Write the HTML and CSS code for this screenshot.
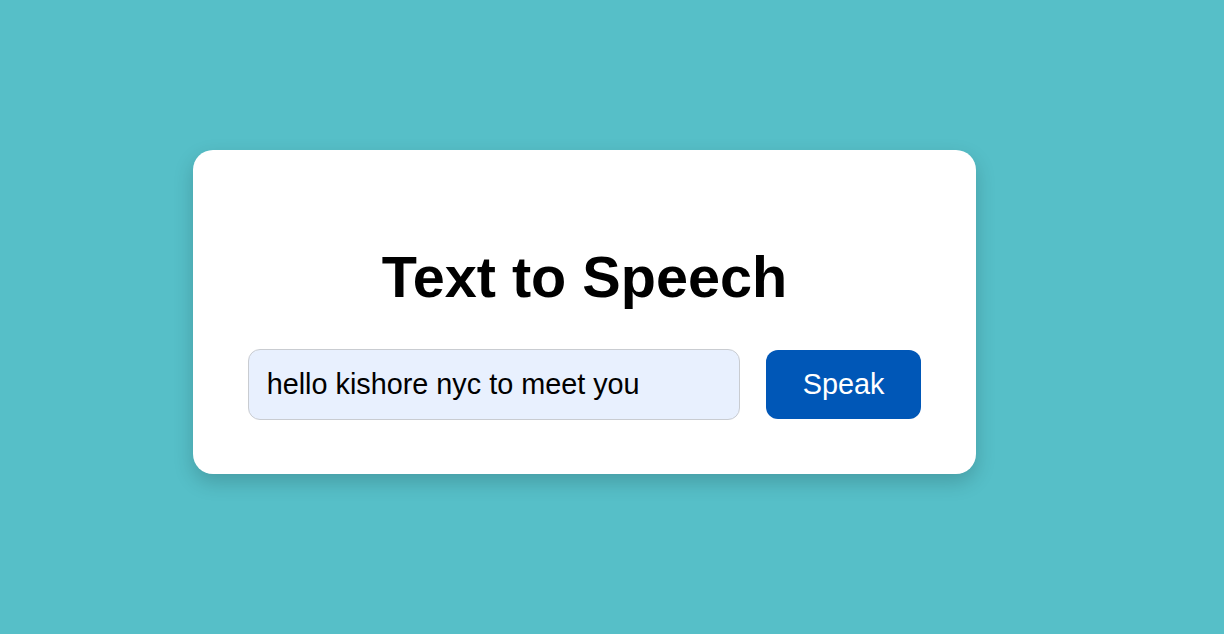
FILE: index.html
```html
<!DOCTYPE html>
<html lang="en">
<head>
<meta charset="utf-8">
<title>Text to Speech</title>
<link rel="stylesheet" href="styles.css">
</head>
<body>
  <main class="card">
    <h1 class="title">Text to Speech</h1>
    <div class="row">
      <input class="text-input" type="text" value="hello kishore nyc to meet you">
      <button class="speak-btn" type="button">Speak</button>
    </div>
  </main>
</body>
</html>
```
FILE: styles.css
```css
html, body {
  margin: 0;
  padding: 0;
}
body {
  background: #56bfc8;
  font-family: "Liberation Sans", Arial, sans-serif;
  height: 100vh;
  display: flex;
  align-items: center;
  justify-content: center;
}
.card {
  background: #ffffff;
  border-radius: 20px;
  box-shadow: 0 8px 20px rgba(0, 0, 0, 0.18);
  padding: 50px 55px 54px;
  margin-right: 55px;
  margin-bottom: 11px;
  display: flex;
  flex-direction: column;
  align-items: center;
}
.title {
  font-size: 57.6px;
  font-weight: bold;
  margin: 44px 0 39px;
  color: #000;
  line-height: 66px;
}
.row {
  display: flex;
  align-items: center;
  gap: 26px;
}
.text-input {
  box-sizing: border-box;
  width: 492px;
  height: 71px;
  padding: 0 18px;
  font-family: "Liberation Sans", Arial, sans-serif;
  font-size: 28.8px;
  color: #000;
  background: #e8f0fe;
  border: 1px solid #c9ccd1;
  border-radius: 12px;
  outline: none;
}
.speak-btn {
  box-sizing: border-box;
  height: 69px;
  padding: 0 37px;
  font-family: "Liberation Sans", Arial, sans-serif;
  font-size: 28.8px;
  color: #ffffff;
  background: #0057b7;
  border: none;
  border-radius: 12px;
  cursor: pointer;
}
```
